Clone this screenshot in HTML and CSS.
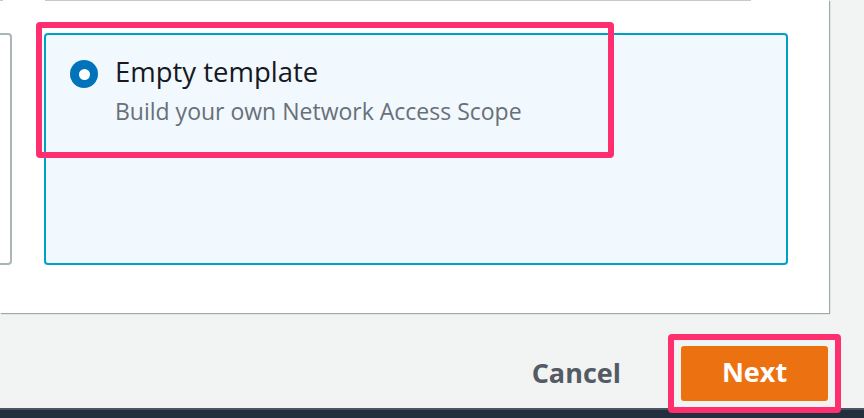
FILE: index.html
```html
<!DOCTYPE html>
<html>
<head>
<meta charset="utf-8">
<link rel="stylesheet" href="styles.css">
</head>
<body>
<div class="page">
  <div class="panel">
    <div class="topline">
      <span class="topline-left"></span>
      <span class="topline-main"></span>
    </div>
    <div class="cards">
      <div class="card card-prev"></div>
      <div class="card card-selected">
        <div class="option">
          <span class="radio"><span class="radio-dot"></span></span>
          <div class="option-text">
            <div class="option-title">Empty template</div>
            <div class="option-desc">Build your own Network Access Scope</div>
          </div>
        </div>
        <div class="highlight highlight-option"></div>
      </div>
    </div>
  </div>
  <div class="footer">
    <button class="btn-link">Cancel</button>
    <div class="btn-wrap">
      <button class="btn-primary">Next</button>
      <div class="highlight highlight-next"></div>
    </div>
  </div>
  <div class="bottombar"></div>
</div>
</body>
</html>
```

FILE: styles.css
```css
* { box-sizing: border-box; }
html, body { margin: 0; padding: 0; }
body {
  background: #f2f3f3;
  font-family: "Open Sans", "Noto Sans", Arial, sans-serif;
  width: 864px;
  height: 418px;
  overflow: hidden;
}
.page {
  display: flex;
  flex-direction: column;
  height: 418px;
}
.panel {
  width: 829px;
  height: 313px;
  background: #ffffff;
  box-shadow: 1px 1px 1px 0 rgba(0, 28, 36, 0.35);
  display: flex;
  flex-direction: column;
}
.topline {
  display: flex;
  height: 1px;
}
.topline-left {
  width: 3px;
  background: #c3cbcc;
}
.topline-main {
  margin-left: 42px;
  width: 706px;
  background: #c3cbcc;
}
.cards {
  display: flex;
  gap: 32px;
  padding-top: 32px;
}
.card {
  height: 232px;
}
.card-prev {
  width: 12px;
  border: 2px solid #aab7b8;
  border-left: none;
  border-radius: 0 4px 4px 0;
}
.card-selected {
  position: relative;
  width: 744px;
  border: 2px solid #00a1c9;
  border-radius: 4px;
  background: #f1f8fe;
}
.option {
  display: flex;
  align-items: flex-start;
  padding: 19px 0 0 24px;
  gap: 17px;
}
.radio {
  width: 28px;
  height: 28px;
  border-radius: 50%;
  background: #0073bb;
  display: flex;
  align-items: center;
  justify-content: center;
  flex: none;
  margin-top: 6px;
}
.radio-dot {
  width: 11px;
  height: 11px;
  border-radius: 50%;
  background: #ffffff;
}
.option-title {
  font-size: 27.5px;
  line-height: 36px;
  color: #16191f;
}
.option-desc {
  font-size: 23px;
  line-height: 30px;
  color: #687078;
  margin-top: 6px;
}
.highlight {
  position: absolute;
  border: 6px solid #ff2e6e;
  border-radius: 4px;
  pointer-events: none;
}
.highlight-option {
  left: -10px;
  top: -13px;
  width: 578px;
  height: 136px;
}
.footer {
  flex: 1;
  display: flex;
  justify-content: flex-end;
  align-items: flex-start;
  padding: 33px 36px 0 0;
}
.btn-link {
  background: none;
  border: none;
  font-family: inherit;
  font-weight: 700;
  font-size: 27px;
  color: #545b64;
  padding: 0;
  margin-top: 11px;
  margin-right: 60px;
  line-height: 32px;
}
.btn-wrap {
  position: relative;
}
.btn-primary {
  width: 147px;
  height: 55px;
  background: #ec7211;
  color: #ffffff;
  border: none;
  border-radius: 3px;
  font-family: inherit;
  font-weight: 700;
  font-size: 27px;
  padding: 0 0 4px 0;
  display: flex;
  align-items: center;
  justify-content: center;
}
.highlight-next {
  left: -13px;
  top: -12px;
  width: 173px;
  height: 79px;
}
.bottombar {
  height: 10px;
  background: #232f3e;
  border-top: 2px solid #4b5561;
}
```
